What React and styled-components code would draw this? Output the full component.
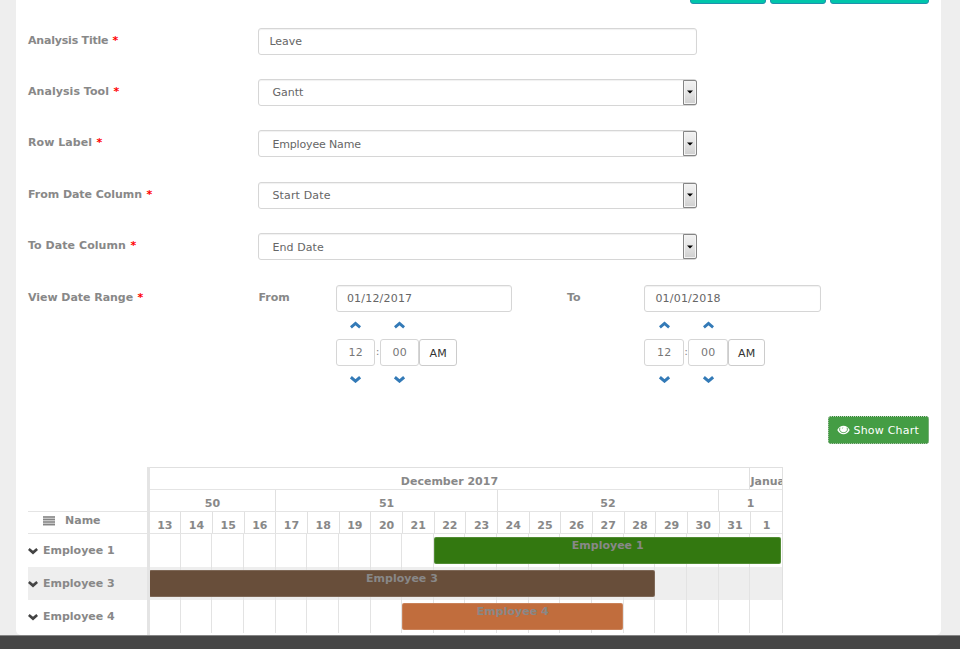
import React from 'react';
import styled, { createGlobalStyle } from 'styled-components';

const GlobalStyle = createGlobalStyle`
  * {
    box-sizing: border-box;
  }
  body {
    margin: 0;
    background: #eee;
    color: #888;
    font-family: Verdana, 'DejaVu Sans', sans-serif;
    font-size: 11px;
    overflow: hidden;
  }
  input, select, button {
    font: inherit;
  }
`;

const Page = styled.div`
  display: flex;
  flex-direction: column;
  height: 649px;
`;

const Panel = styled.main`
  background: #fff;
  border-radius: 0 0 5px 5px;
  display: flex;
  flex-direction: column;
  height: 635px;
  flex: none;
  margin: 0 19px 0 16px;
  padding: 0 12px;
  overflow: hidden;
`;

const Footer = styled.footer`
  background: #464646;
  border-top: 1px solid #858585;
  flex: 1;
`;

const Toolbar = styled.div`
  display: flex;
  align-items: flex-end;
  justify-content: flex-end;
  gap: 4px;
  height: 4px;
  overflow: hidden;
`;

const ToolbarButton = styled.div`
  background: #00c5ab;
  border: 1px solid #2090ad;
  border-radius: 3px;
  flex: none;
  height: 28px;
  width: ${props => props.$width}px;
`;

const Form = styled.form`
  display: flex;
  flex-direction: column;
  padding-top: 23.6px;
`;

const FormRow = styled.div`
  display: flex;
  align-items: flex-start;
  height: 51.4px;
`;

const Label = styled.label`
  flex: none;
  font-weight: bold;
  letter-spacing: ${props => props.$tracking || 0}px;
  line-height: 14px;
  padding-top: 6px;
  width: ${props => props.$width || 230.4}px;
`;

const Required = styled.span`
  color: #f00;
  letter-spacing: 0;
  margin-left: .6px;
`;

const Field = styled.div`
  background: #fff;
  border: 1px solid #d6d6d6;
  border-radius: 3px;
  box-shadow: inset 0 1px 1px rgba(0, 0, 0, .06);
  color: #666;
  display: flex;
  flex: none;
  align-items: center;
  height: 27px;
  letter-spacing: ${props => props.$tracking || 0}px;
  line-height: 14px;
  padding-left: ${props => (props.$select ? 13 : 10)}px;
  width: ${props => props.$width || 439}px;
`;

const FieldText = styled.span`
  padding-top: 2px;
`;

const SelectArrow = styled.span`
  align-self: stretch;
  display: flex;
  align-items: center;
  justify-content: center;
  background: linear-gradient(#f2f2f2, #e6e6e6 45%, #cfcfcf);
  border: 1px solid #858585;
  border-radius: 0 2px 2px 0;
  box-shadow: inset 0 0 0 1px #f4f4f4;
  margin: 0 -1px 0 auto;
  width: 14px;
`;

const TimePicker = styled.div`
  display: grid;
  grid-template-columns: 39.5px 4.5px 39.5px 37.5px;
  grid-template-rows: 27px 27px 27px;
  align-items: center;
  justify-items: center;
  line-height: 14px;
`;

const TimeBox = styled.div`
  border: 1px solid ${props => (props.$button ? '#ccc' : '#d6d6d6')};
  border-radius: 3px;
  color: ${props => (props.$button ? '#333' : '#777')};
  height: 27px;
  letter-spacing: .2px;
  line-height: ${props => (props.$button ? 27 : 26)}px;
  margin-top: ${props => (props.$button ? 1 : 0)}px;
  text-align: center;
  width: 100%;
`;

const DateColumn = styled.div`
  flex: none;
  width: ${props => props.$width}px;
`;

const Actions = styled.div`
  display: flex;
  justify-content: flex-end;
  margin-top: 80px;
`;

const ShowButton = styled.button`
  display: flex;
  align-items: center;
  gap: 3.5px;
  background: #449d44;
  border: 1px solid #398439;
  border-radius: 3px;
  color: #fff;
  height: 28px;
  letter-spacing: .2px;
  outline: 1px dotted #b9dcb9;
  outline-offset: -1px;
  padding: 1px 0 0 8px;
  white-space: nowrap;
  width: 101px;
`;

const Gantt = styled.section`
  display: flex;
  flex: none;
  font-weight: bold;
  margin-top: 23px;
  height: 168px;
`;

const Side = styled.div`
  display: flex;
  flex-direction: column;
  width: 119px;
  padding-top: 44px;
`;

const SideHeader = styled.div`
  border-top: 1px solid #e4e4e4;
  border-bottom: 1px solid #e4e4e4;
  display: flex;
  align-items: center;
  gap: 10px;
  height: 23px;
  padding: 0 0 3px 15px;
`;

const SideRow = styled.div`
  background: ${props => (props.$striped ? '#eee' : '#fff')};
  display: flex;
  align-items: center;
  gap: 5px;
  height: 33.2px;
`;

const Divider = styled.div`
  background: #e4e4e4;
  width: 2.5px;
`;

const Timeline = styled.div`
  border-top: 1px solid #e0e0e0;
  border-right: 1px solid #e0e0e0;
  height: 166px;
  width: 633.5px;
  overflow: hidden;
`;

const HeaderRow = styled.div`
  display: flex;
  border-bottom: 1px solid #e4e4e4;
  height: 22px;
`;

const HeaderCell = styled.div`
  border-right: 1px solid #e0e0e0;
  flex: ${props => props.$days} 0 0;
  min-width: 0;
  height: 21px;
  line-height: 15px;
  padding-top: 6px;
  overflow: hidden;
  text-align: center;
  white-space: nowrap;

  &:last-child {
    border-right: 0;
  }
`;

const TimelineRow = styled.div`
  background: ${props => (props.$striped ? '#eee' : '#fff')};
  display: grid;
  grid-template-columns: repeat(20, 1fr);
  height: 33.2px;
  margin-left: -.5px;
`;

const DayCell = styled.div`
  border-right: 1px solid #e3e3e3;
  grid-column: ${props => props.$day};
  grid-row: 1;

  &:nth-child(20) {
    border-right: 0;
  }
`;

const Bar = styled.div`
  background: ${props => props.$color};
  border: 1px solid rgba(255, 255, 255, .15);
  border-radius: 2px;
  color: #888;
  grid-column: ${props => props.$from} / ${props => props.$to};
  grid-row: 1;
  height: 27px;
  line-height: 15px;
  margin: 3px .5px 0 0;
  text-align: center;
  z-index: 1;
`;

const ICON_SHAPES = {
  up: '.8,5.8 5,2.200 9.2,5.8',
  down: '.8,2 5,5.6 9.2,2',
};

const Chevron = ({ dir, color = '#337ab7', size = 11 }) => (
  <svg width={size} height={size * 0.8} viewBox="0 0 10 8">
    <polyline points={ICON_SHAPES[dir]} fill="none" stroke={color} strokeWidth="2.7" />
  </svg>
);

const EyeIcon = () => (
  <svg width="13" height="10" viewBox="0 0 13 10">
    <path d="M.3 5C2 2 4 .8 6.500.8S11 2 12.700 5C11 8 9 9.200 6.500 9.200S2 8 .3 5z" fill="#fff" />
    <path d="M3 2.800C1.800 5.200 3.500 7.600 6.500 7.600S11.200 5.200 10 2.800" fill="none" stroke="#449d44" strokeWidth="1" />
    <path d="M4.800 3.600c.2-.9 1-1.300 1.800-1.200-.8.300-1.200.7-1.300 1.400z" fill="#449d44" />
  </svg>
);

const ListIcon = () => (
  <svg width="12" height="10" viewBox="0 0 12 10">
    <path d="M0 0h12v10H0z" fill="#ddd" />
    <path d="M0 1h12M0 3.500h12M0 6h12M0 8.500h12" stroke="#858585" strokeWidth="1.4" />
  </svg>
);

const ArrowIcon = () => (
  <svg width="6" height="4" viewBox="0 0 6 4">
    <path d="M0 .5h6L3 3.500z" fill="#000" />
  </svg>
);

const fields = [
  { label: 'Analysis Title', value: 'Leave', labelTracking: -0.2 },
  { label: 'Analysis Tool', value: 'Gantt', select: true, labelTracking: 0.05 },
  { label: 'Row Label', value: 'Employee Name', select: true, labelTracking: 0.06, tracking: -0.15 },
  { label: 'From Date Column', value: 'Start Date', select: true, labelTracking: -0.04, tracking: 0.15 },
  { label: 'To Date Column', value: 'End Date', select: true, labelTracking: 0.06, tracking: 0.1 },
];

const days = [13, 14, 15, 16, 17, 18, 19, 20, 21, 22, 23, 24, 25, 26, 27, 28, 29, 30, 31, 1];

const headers = [
  [{ text: 'December 2017', days: 19 }, { text: 'January', days: 1 }],
  [{ text: '50', days: 4 }, { text: '51', days: 7 }, { text: '52', days: 7 }, { text: '1', days: 2 }],
  days.map(day => ({ text: day, days: 1 })),
];

const tasks = [
  { name: 'Employee 1', from: 10, to: 21, color: '#337810' },
  { name: 'Employee 3', from: 1, to: 17, color: '#684e3a' },
  { name: 'Employee 4', from: 9, to: 16, color: '#c16d3d' },
];

const DateTime = ({ date, width }) => (
  <DateColumn $width={width}>
    <Field $width={176.5} $tracking={0.2}><FieldText>{date}</FieldText></Field>
    <TimePicker>
      <Chevron dir="up" />
      <span />
      <Chevron dir="up" />
      <span />
      <TimeBox>12</TimeBox>
      <span>:</span>
      <TimeBox>00</TimeBox>
      <TimeBox $button>AM</TimeBox>
      <Chevron dir="down" />
      <span />
      <Chevron dir="down" />
    </TimePicker>
  </DateColumn>
);

const App = () => (
  <Page>
    <GlobalStyle />
    <Panel>
      <Toolbar>
        <ToolbarButton $width={76} />
        <ToolbarButton $width={56} />
        <ToolbarButton $width={99} />
      </Toolbar>
      <Form>
        {fields.map(field => (
          <FormRow key={field.label}>
            <Label $tracking={field.labelTracking}>{field.label} <Required>*</Required></Label>
            <Field $select={field.select} $tracking={field.tracking}>
              <FieldText>{field.value}</FieldText>
              {field.select && <SelectArrow><ArrowIcon /></SelectArrow>}
            </Field>
          </FormRow>
        ))}
        <FormRow>
          <Label $tracking={-0.04}>View Date Range <Required>*</Required></Label>
          <Label $width={77.5}>From</Label>
          <DateTime date="01/12/2017" width={231} />
          <Label $width={77.5}>To</Label>
          <DateTime date="01/01/2018" width={177} />
        </FormRow>
      </Form>
      <Actions>
        <ShowButton type="button"><EyeIcon />Show Chart</ShowButton>
      </Actions>
      <Gantt>
        <Side>
          <SideHeader><ListIcon />Name</SideHeader>
          {tasks.map((task, i) => (
            <SideRow key={task.name} $striped={i % 2 === 1}>
              <Chevron dir="down" color="#444" size={10} />
              {task.name}
            </SideRow>
          ))}
        </Side>
        <Divider />
        <Timeline>
          {headers.map((cells, i) => (
            <HeaderRow key={i}>
              {cells.map(cell => (
                <HeaderCell key={cell.text} $days={cell.days}>{cell.text}</HeaderCell>
              ))}
            </HeaderRow>
          ))}
          {tasks.map((task, i) => (
            <TimelineRow key={task.name} $striped={i % 2 === 1}>
              {days.map((day, n) => <DayCell key={day} $day={n + 1} />)}
              <Bar $from={task.from} $to={task.to} $color={task.color}>{task.name}</Bar>
            </TimelineRow>
          ))}
        </Timeline>
      </Gantt>
    </Panel>
    <Footer />
  </Page>
);

export default App;
